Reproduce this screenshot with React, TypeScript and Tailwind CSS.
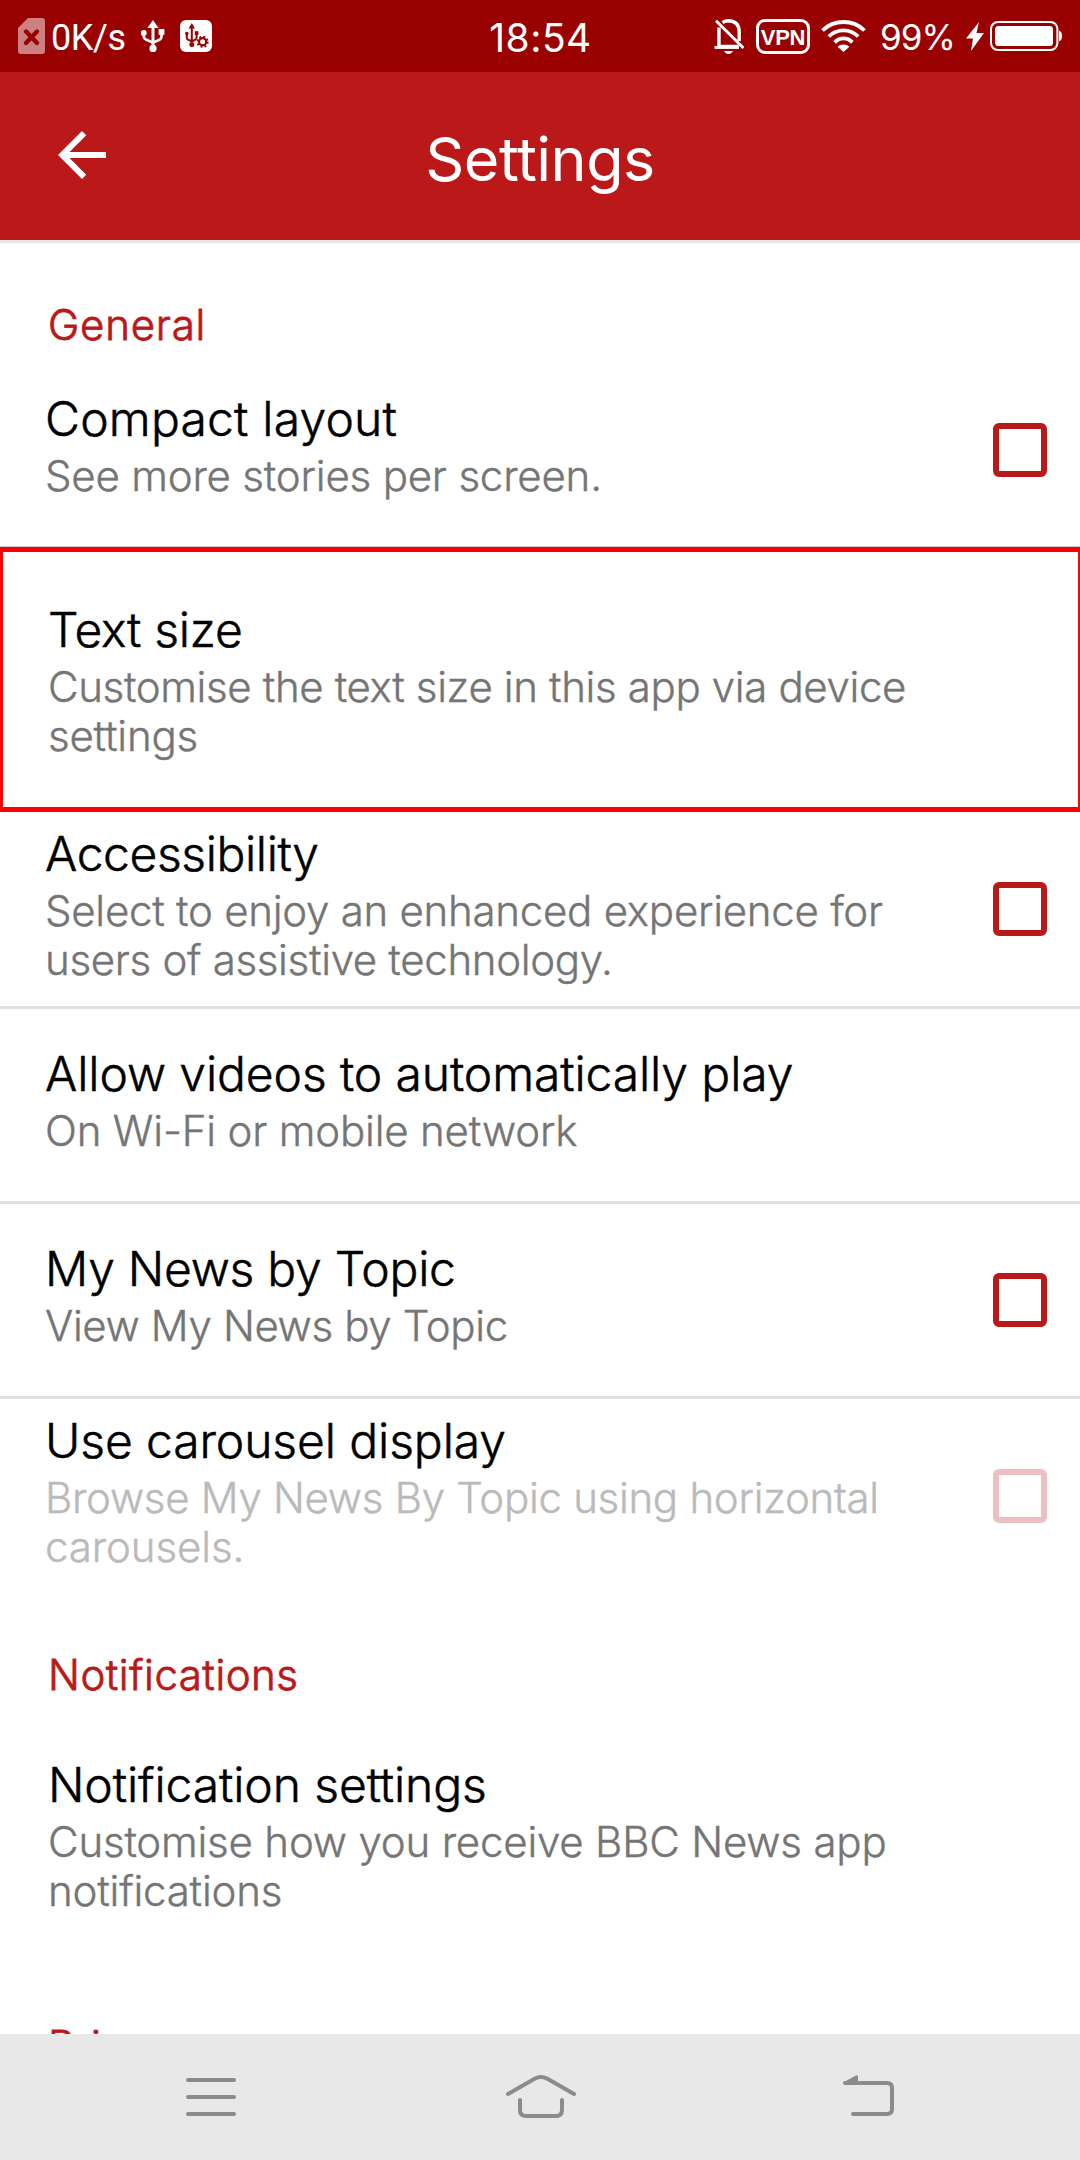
import type { ReactNode } from "react";

type Line = { text: string; track: string };

function UsbGlyph({ className }: { className?: string }) {
  return (
    <svg className={className} viewBox="0 0 25 32" fill="none" stroke="currentColor" strokeWidth="2.6">
      <path d="M13 6V28" strokeWidth="3" />
      <path d="M3.6 13V15.5Q3.6 18.8 7 20L13 22.6L19 20Q21.6 18.8 21.6 15.5V12" />
      <path d="M13 0L18.6 8H7.4Z" fill="currentColor" stroke="none" />
      <circle cx="13" cy="28.4" r="3.6" fill="currentColor" stroke="none" />
      <circle cx="3.8" cy="13" r="2.9" fill="currentColor" stroke="none" />
      <rect x="18.6" y="9" width="5.8" height="5.8" fill="currentColor" stroke="none" />
    </svg>
  );
}

function StatusBar() {
  return (
    <div className="grid h-[72px] shrink-0 grid-cols-[1fr_auto_1fr] overflow-hidden bg-[#990000] text-white">
      <div className="flex items-start pl-[18px]">
        <svg className="mt-[18px] h-9 w-[27px]" viewBox="0 0 27 36">
          <path d="M10 0H24Q27 0 27 3V33Q27 36 24 36H3Q0 36 0 33V10Z" fill="#cc8080" />
          <path d="M8 13.5L19 25M19 13.5L8 25" stroke="#990000" strokeWidth="4.4" strokeLinecap="round" />
        </svg>
        <span className="ml-1.5 w-[89px] font-['Roboto',sans-serif] text-[36px] leading-[76px] tracking-[-0.4px]">0K/s</span>
        <UsbGlyph className="mt-5 h-8 w-[25px]" />
        <div className="mt-5 ml-[15px] h-8 w-8 rounded-[6px] bg-white text-[#990000]">
          <svg className="h-8 w-8" viewBox="0 0 32 32" fill="none" stroke="currentColor">
            <path d="M11.8 7V24M6.8 15V18Q6.8 19.6 11.8 21.2Q16.6 19.6 16.6 17.5V13" strokeWidth="2" />
            <path d="M11.8 3L15 8.5H8.6Z" fill="currentColor" stroke="none" />
            <circle cx="11.8" cy="24.6" r="2.5" fill="currentColor" stroke="none" />
            <circle cx="6.8" cy="13.6" r="1.8" fill="currentColor" stroke="none" />
            <rect x="14.8" y="11.2" width="3.6" height="3.8" fill="currentColor" stroke="none" />
            <circle cx="22.6" cy="21.8" r="5.6" fill="#fff" stroke="none" />
            <circle cx="22.6" cy="21.8" r="3.6" strokeWidth="2.2" />
            <circle cx="22.6" cy="21.8" r="5.2" strokeWidth="1.8" strokeDasharray="2 2.08" />
          </svg>
        </div>
      </div>
      <span className="pl-px text-[39px] leading-[75px] tracking-[0.5px]">18:54</span>
      <div className="flex items-start justify-end pr-[18px]">
        <svg className="mt-[19px] h-[35px] w-[30px]" viewBox="0 0 30 35" fill="none" stroke="currentColor" strokeWidth="3.4">
          <path d="M5 8.5V27.5H24.5" />
          <path d="M8.5 3.4Q11.5 1.7 14.6 1.7Q24.8 2.2 25.2 12V22" />
          <path d="M0.5 28.4H25" strokeWidth="3" />
          <path d="M2 1.8L29.5 29" strokeWidth="3" />
          <path d="M10 32H19Q17.5 35 14.5 35Q11.5 35 10 32Z" fill="currentColor" stroke="none" />
        </svg>
        <div className="mt-[19px] ml-3 flex h-[35px] w-[54px] items-center justify-center rounded-[9px] border-[3px] border-white">
          <span className="pt-[3px] font-['Liberation_Sans',Arial,sans-serif] text-[22px] leading-none font-bold tracking-[-0.3px]">VPN</span>
        </div>
        <svg className="mt-5 ml-[11px] h-8 w-[45px]" viewBox="0 0 45 32" fill="none" stroke="currentColor" strokeWidth="3.8">
          <path d="M1.5 10.5Q10 2 22.5 2Q35 2 43.5 10.5" />
          <path d="M7.8 16.5Q14 10.4 22.5 10.4Q31 10.4 37.2 16.5" />
          <path d="M13.6 22.3Q17.5 18.4 22.5 18.4Q27.5 18.4 31.4 22.3" />
          <path d="M22.5 32L16.6 26.8Q19 24.6 22.5 24.6Q26 24.6 28.4 26.8Z" fill="currentColor" stroke="none" />
        </svg>
        <span className="ml-3.5 w-[86px] text-[35px] leading-[74px] tracking-[-1px]">99%</span>
        <svg className="mt-[22px] h-[29px] w-[18px]" viewBox="0 0 18 29" fill="currentColor">
          <path d="M13 0L0 16.5H7L5 29L18 11H10.5Z" />
        </svg>
        <svg className="mt-[21px] ml-1.5 h-[30px] w-[72px]" viewBox="0 0 72 30" fill="none">
          <rect x="1" y="1" width="66.4" height="28" rx="7" stroke="currentColor" strokeWidth="2" />
          <rect x="5" y="5" width="58" height="20" rx="3.5" fill="currentColor" />
          <path d="M69 9.5Q72 10.5 72 15Q72 19.5 69 20.5Z" fill="currentColor" />
        </svg>
      </div>
    </div>
  );
}

function Header() {
  return (
    <header className="grid h-[171px] shrink-0 grid-cols-[1fr_auto_1fr] overflow-hidden border-b-[3px] border-[#e6e6e6] bg-[#bb1919] text-white">
      <svg className="mt-[47px] ml-[46px] h-[72px] w-[72px]" viewBox="0 0 24 24" fill="currentColor">
        <path d="M20 11H7.83l5.59-5.59L12 4l-8 8 8 8 1.41-1.41L7.83 13H20v-2z" />
      </svg>
      <h1 className="text-[61px] leading-[174px] tracking-[-0.5px]">Settings</h1>
    </header>
  );
}

function SectionTitle({ children, className }: { children: ReactNode; className: string }) {
  return (
    <h2 className={`shrink-0 pl-12 text-[42px] leading-[49px] font-light text-[#bb1919] [-webkit-text-stroke:0.8px] ${className}`}>
      {children}
    </h2>
  );
}

function Checkbox({ faded }: { faded?: boolean }) {
  return (
    <span
      className={`mr-[33px] h-[54px] w-[54px] shrink-0 self-center rounded-[6px] border-[6px] ${faded ? "border-[#edbfc0]" : "border-[#bb1919]"}`}
    />
  );
}

type RowProps = { title: Line; summary: Line[]; className: string; checkbox?: "on" | "faded"; faded?: boolean };

function Row({ title, summary, className, checkbox, faded }: RowProps) {
  return (
    <div className={`flex shrink-0 justify-between ${className}`}>
      <div className="font-light whitespace-nowrap">
        <div className={`text-[48px] leading-[57px] text-black [-webkit-text-stroke:0.5px] ${title.track}`}>{title.text}</div>
        <div className={`mt-[3.5px] text-[42px] leading-[49px] [-webkit-text-stroke:0.4px] ${faded ? "text-[#bababa]" : "text-[#757575]"}`}>
          {summary.map((line) => (
            <div key={line.text} className={line.track}>
              {line.text}
            </div>
          ))}
        </div>
      </div>
      {checkbox && <Checkbox faded={checkbox === "faded"} />}
    </div>
  );
}

/* Shifts only the text block, so the checkbox stays centred in its row. */
const textTop36 = "[&>div]:pt-9";
const textTop37 = "[&>div]:pt-9";
const textTop14 = "[&>div]:pt-[13px]";

function NavBar() {
  return (
    <nav className="flex h-[126px] shrink-0 items-start bg-[#e8e8e8] text-[#8b8b8b]">
      <svg className="mt-11 ml-[186px] h-[38px] w-[50px]" viewBox="0 0 50 38" stroke="currentColor" strokeWidth="4" strokeLinecap="round">
        <path d="M2 2H48M2 19H48M2 36H48" />
      </svg>
      <svg className="mt-[41px] ml-[270px] h-[43px] w-[70px]" viewBox="0 0 70 43" fill="none" stroke="currentColor" strokeWidth="4" strokeLinecap="round">
        <path d="M2 19L29 3.6Q35 0.6 41 3.6L68 19" />
        <path d="M14 25V35Q14 41 20 41H50Q56 41 56 35V25" />
      </svg>
      <svg className="mt-[41px] ml-[267px] h-[41px] w-[51px]" viewBox="0 0 51 41" fill="none" stroke="currentColor" strokeWidth="4" strokeLinecap="round">
        <path d="M2 8H44Q49 8 49 13V34Q49 39 44 39H10" />
        <path d="M0.6 7.2L13.4 0.2Q15 0 15 1.4V8H2Z" fill="currentColor" stroke="none" />
      </svg>
    </nav>
  );
}

export default function App() {
  return (
    <div className="flex h-[2160px] w-[1080px] flex-col overflow-hidden bg-white font-['Inter',sans-serif]">
      <StatusBar />
      <Header />
      <main className="flex min-h-0 flex-1 flex-col overflow-hidden">
        <SectionTitle className="h-[111px] pt-[57px] tracking-[0.8px]">General</SectionTitle>
        <Row
          className={`h-[193px] border-b border-[#cccccc] pl-[45px] ${textTop36}`}
          title={{ text: "Compact layout", track: "tracking-[0.2px]" }}
          summary={[{ text: "See more stories per screen.", track: "tracking-[-0.2px]" }]}
          checkbox="on"
        />
        <Row
          className="h-[265px] border-y-[5px] border-r-2 border-l-[3px] border-[#ff0000] pt-[49px] pl-[45px]"
          title={{ text: "Text size", track: "tracking-[-0.25px]" }}
          summary={[
            { text: "Customise the text size in this app via device", track: "tracking-[-0.36px]" },
            { text: "settings", track: "tracking-[-0.2px]" },
          ]}
        />
        <Row
          className={`h-[197px] border-b-[3px] border-[#e0e0e0] pl-[45px] ${textTop14}`}
          title={{ text: "Accessibility", track: "tracking-[-0.4px]" }}
          summary={[
            { text: "Select to enjoy an enhanced experience for", track: "tracking-[-0.26px]" },
            { text: "users of assistive technology.", track: "tracking-[-0.32px]" },
          ]}
          checkbox="on"
        />
        <Row
          className={`h-[195px] border-b-[3px] border-[#e0e0e0] pl-[45px] ${textTop37}`}
          title={{ text: "Allow videos to automatically play", track: "tracking-[-0.1px]" }}
          summary={[{ text: "On Wi-Fi or mobile network", track: "tracking-[-0.18px]" }]}
        />
        <Row
          className={`h-[195px] border-b-[3px] border-[#e0e0e0] pl-[45px] ${textTop37}`}
          title={{ text: "My News by Topic", track: "tracking-[-0.25px]" }}
          summary={[{ text: "View My News by Topic", track: "tracking-[-0.37px]" }]}
          checkbox="on"
        />
        <Row
          className={`h-[194px] pl-[45px] ${textTop14}`}
          title={{ text: "Use carousel display", track: "tracking-[-0.1px]" }}
          summary={[
            { text: "Browse My News By Topic using horizontal", track: "tracking-[-0.3px]" },
            { text: "carousels.", track: "tracking-[-0.1px]" },
          ]}
          checkbox="faded"
          faded
        />
        <SectionTitle className="h-[109px] pt-[57px] tracking-[0.5px]">Notifications</SectionTitle>
        <Row
          className="h-[267px] pt-[54px] pl-12"
          title={{ text: "Notification settings", track: "tracking-[-0.1px]" }}
          summary={[
            { text: "Customise how you receive BBC News app", track: "tracking-[-0.2px]" },
            { text: "notifications", track: "tracking-[-0.2px]" },
          ]}
        />
        <SectionTitle className="h-[111px] pt-[52px] tracking-[0.5px]">Privacy</SectionTitle>
      </main>
      <NavBar />
    </div>
  );
}
